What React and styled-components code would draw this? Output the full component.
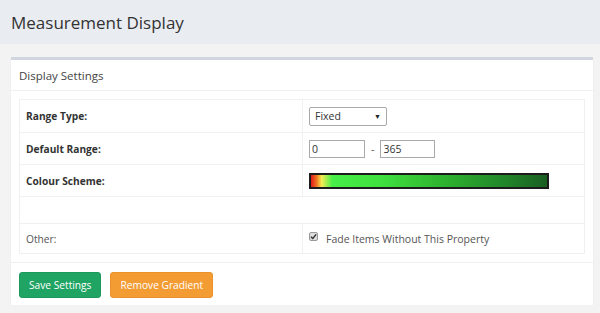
import styled, { createGlobalStyle } from 'styled-components';

const GlobalStyle = createGlobalStyle`
  body {
    margin: 0;
    background: #f3f3f3;
    font-family: "Open Sans", "Liberation Sans", sans-serif;
    color: #333;
  }
`;

const Header = styled.header`
  height: 44px;
  padding-left: 11px;
  display: flex;
  align-items: center;
  background: #e9edf2;
`;

const Title = styled.h1`
  margin: 0;
  font-size: 17px;
  font-weight: 400;
  color: #333;
`;

const Content = styled.main`
  padding: 13px 7px 0 11px;
`;

const Box = styled.section`
  background: #fff;
  border-top: 3px solid #d2d6de;
  box-shadow: 0 1px 1px rgba(0, 0, 0, 0.08);
`;

const BoxHeader = styled.div`
  height: 30px;
  padding-left: 8px;
  display: flex;
  align-items: center;
  border-bottom: 1px solid #f0f0f0;
  font-size: 11.5px;
  color: #444;
`;

const BoxBody = styled.div`
  padding: 8px;
  border-bottom: 1px solid #f0f0f0;
`;

const Table = styled.div`
  border: 1px solid #f0f0f0;
`;

const Row = styled.div`
  box-sizing: border-box;
  display: grid;
  grid-template-columns: ${(p) => (p.$full ? '1fr' : '282px 1fr')};
  height: ${(p) => p.$h}px;
  border-top: ${(p) => (p.$first ? 'none' : '1px solid #f0f0f0')};
`;

const Label = styled.div`
  padding-left: 6px;
  display: flex;
  align-items: center;
  font-size: 10.2px;
  font-weight: ${(p) => (p.$bold ? 700 : 400)};
  color: ${(p) => (p.$bold ? '#333' : '#555')};
`;

const Cell = styled.div`
  border-left: 1px solid #f0f0f0;
  padding-left: 6px;
  display: flex;
  align-items: center;
  gap: 5px;
`;

const Select = styled.div`
  width: 78px;
  height: 19px;
  box-sizing: border-box;
  border: 1px solid #aaa;
  border-radius: 2px;
  padding: 0 5px;
  display: flex;
  align-items: center;
  justify-content: space-between;
  font-size: 10.5px;
  color: #333;
`;

const Caret = styled.span`
  font-size: 7px;
  color: #222;
`;

const Input = styled.input`
  width: ${(p) => p.$w}px;
  height: 18px;
  box-sizing: border-box;
  border: 1px solid #a9a9a9;
  padding: 0 2px;
  font-family: inherit;
  font-size: 10.5px;
  color: #333;
  outline: none;
`;

const Dash = styled.span`
  font-size: 10.5px;
  color: #555;
  margin: 0 1px;
`;

const Gradient = styled.div`
  width: 240px;
  height: 16px;
  box-sizing: border-box;
  border: 2px solid #1c1c1c;
  background: linear-gradient(
    to right,
    #e21b1b 0%,
    #f07a22 2.5%,
    #f6ee55 4.5%,
    #47ef47 9%,
    #3fe03f 30%,
    #2fb52f 55%,
    #228a2a 80%,
    #195e22 100%
  );
`;

const Check = styled.span`
  width: 9px;
  height: 9px;
  box-sizing: border-box;
  border: 1px solid #9a9a9a;
  border-radius: 2px;
  background: #dcdcdc;
  display: inline-flex;
  align-items: center;
  justify-content: center;
  margin-right: 3px;
  margin-top: -4px;
`;

const CheckText = styled.span`
  font-size: 10.5px;
  color: #555;
`;

const Footer = styled.div`
  padding: 9px 8px 7px;
  display: flex;
  gap: 9px;
`;

const Button = styled.button`
  height: 26px;
  padding: 0 9px;
  border: 1px solid ${(p) => p.$border};
  border-radius: 3px;
  background: ${(p) => p.$bg};
  color: #fff;
  font-family: inherit;
  font-size: 10.2px;
`;

export default function App() {
  return (
    <>
      <GlobalStyle />
      <Header>
        <Title>Measurement Display</Title>
      </Header>
      <Content>
        <Box>
          <BoxHeader>Display Settings</BoxHeader>
          <BoxBody>
            <Table>
              <Row $h={32} $first>
                <Label $bold>Range Type:</Label>
                <Cell>
                  <Select>
                    Fixed
                    <Caret>▼</Caret>
                  </Select>
                </Cell>
              </Row>
              <Row $h={32}>
                <Label $bold>Default Range:</Label>
                <Cell>
                  <Input $w={56} defaultValue="0" />
                  <Dash>-</Dash>
                  <Input $w={55} defaultValue="365" />
                </Cell>
              </Row>
              <Row $h={32}>
                <Label $bold>Colour Scheme:</Label>
                <Cell>
                  <Gradient />
                </Cell>
              </Row>
              <Row $h={27} $full />
              <Row $h={30}>
                <Label>Other:</Label>
                <Cell>
                  <Check>
                    <svg width="7" height="7" viewBox="0 0 8 8">
                      <path d="M1 4.2 L3.2 6.3 L7 1.5" fill="none" stroke="#333" strokeWidth="1.6" />
                    </svg>
                  </Check>
                  <CheckText>Fade Items Without This Property</CheckText>
                </Cell>
              </Row>
            </Table>
          </BoxBody>
          <Footer>
            <Button $bg="#1fa463" $border="#1b9a5c">Save Settings</Button>
            <Button $bg="#f39c33" $border="#eb922c">Remove Gradient</Button>
          </Footer>
        </Box>
      </Content>
    </>
  );
}
